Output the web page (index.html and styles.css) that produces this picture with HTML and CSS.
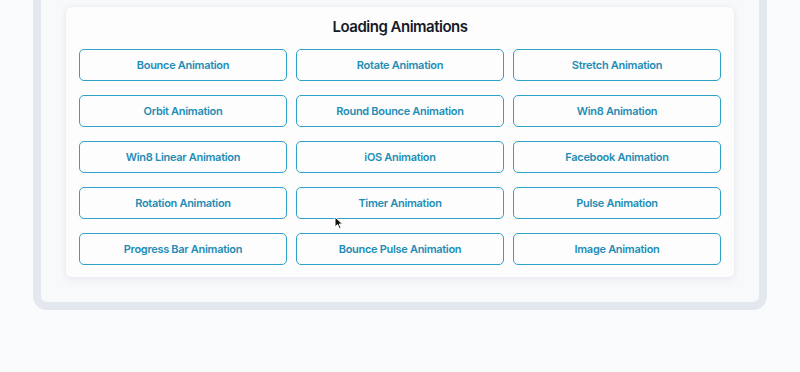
FILE: index.html
```html
<!DOCTYPE html>
<html lang="en">
<head>
  <meta charset="UTF-8" />
  <meta name="viewport" content="width=device-width, initial-scale=1.0" />
  <title>Loading Animations</title>
  <link rel="stylesheet" href="styles.css">
</head>
<body>
  <div class="frame">
    <div class="card">
      <h2 class="card-title">Loading Animations</h2>
      <div class="buttons">
        <button class="btn-demo">Bounce Animation</button>
        <button class="btn-demo">Rotate Animation</button>
        <button class="btn-demo">Stretch Animation</button>

        <button class="btn-demo">Orbit Animation</button>
        <button class="btn-demo">Round Bounce Animation</button>
        <button class="btn-demo">Win8 Animation</button>

        <button class="btn-demo">Win8 Linear Animation</button>
        <button class="btn-demo">iOS Animation</button>
        <button class="btn-demo">Facebook Animation</button>

        <button class="btn-demo">Rotation Animation</button>
        <button class="btn-demo">Timer Animation</button>
        <button class="btn-demo">Pulse Animation</button>

        <button class="btn-demo">Progress Bar Animation</button>
        <button class="btn-demo">Bounce Pulse Animation</button>
        <button class="btn-demo">Image Animation</button>
      </div>
    </div>
  </div>

  <svg class="cursor" width="10" height="14" viewBox="0 0 10 14">
    <path d="M1 1 L1 11 L3.5 8.6 L5.4 12.6 L7 11.9 L5.2 8 L8.6 8 Z" fill="#111" stroke="#fff" stroke-width="1" />
  </svg>
</body>
</html>
```

FILE: styles.css
```css
* {
  box-sizing: border-box;
}

body {
  background-color: #fafbfc;
  font-family: Inter, 'Noto Sans', sans-serif;
  margin: 0;
  height: 100vh;
  position: relative;
}

.frame {
  width: 734px;
  margin-left: 33px;
  padding: 6px 24px 24px;
  background-color: #f8f9fb;
  border: 8px solid #e3e8ef;
  border-top: none;
  border-radius: 0 0 14px 14px;
}

.card {
  background-color: #fdfdfe;
  border: 1px solid #eceff3;
  border-radius: 6px;
  box-shadow: 0 2px 8px rgba(30, 40, 60, 0.06);
  padding: 8px 13px 12px;
}

.card-title {
  margin: 0 0 10px;
  font-size: 15px;
  line-height: 24px;
  font-weight: 600;
  letter-spacing: -0.5px;
  text-align: center;
  color: #161a26;
}

.buttons {
  display: grid;
  grid-template-columns: repeat(3, 1fr);
  column-gap: 9px;
  row-gap: 14px;
}

.btn-demo {
  height: 32px;
  background: #fdfdfe;
  border: 1.5px solid #2fa2c8;
  border-radius: 5px;
  color: #1e8db5;
  font-family: Inter, 'Noto Sans', sans-serif;
  font-size: 11px;
  font-weight: 600;
  letter-spacing: -0.3px;
  cursor: pointer;
}

.cursor {
  position: absolute;
  left: 334px;
  top: 216px;
}
```
